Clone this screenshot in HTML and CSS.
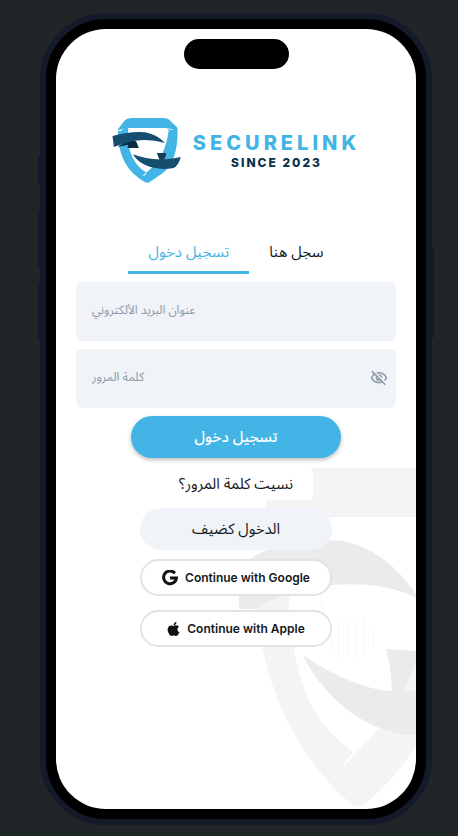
FILE: index.html
```html
<!DOCTYPE html>
<html lang="ar">
<head>
<meta charset="utf-8">
<meta name="viewport" content="width=device-width, initial-scale=1">
<title>SecureLink</title>
<link rel="stylesheet" href="styles.css">
</head>
<body>
<div class="phone">
  <span class="side side-mute"></span>
  <span class="side side-up"></span>
  <span class="side side-down"></span>
  <span class="side side-power"></span>
  <main class="screen">
    <svg class="watermark" viewBox="230 460 186 349" aria-hidden="true">
      <g fill="#f4f4f4">
        <path d="M266 503Q276 480 292 470Q300 468 312 468H416V517H262Z"/>
        <path d="M256 604Q266 599 289 590C289 650 302 692 320 720Q334 738 353 752L340 770L380 728L416 690V746C394 780 374 797 361 806Q356 808 350 803C300 759 264 694 256 604Z"/>
      </g>
      <g fill="#ebebeb">
        <path d="M238 574C245 553 285 540 330 540C365 541 393 561 416 594V598C385 581 340 582 304 589Q278 594 257 609H239Z"/>
        <path d="M303 655C330 674 365 690 392 691Q391 665 386 649L416 651V735C366 735 321 694 303 655Z"/>
      </g>
      <path fill="#f4f4f4" d="M416 662V691H404Z"/>
      <g fill="none" stroke="#f7f7f7">
        <path d="M338.500 618v40M347.500 622v34M356.500 620v40M364.500 617v40M373.500 627v20M331.500 630v20M320 598q5 14 6 30"/>
      </g>
    </svg>
    <div class="island"></div>
    <header class="brand">
      <svg class="brand-mark" viewBox="39 39 204 195" aria-hidden="true">
        <path fill="#43b4e6" d="M55 79Q55 72 60 67L76 46Q82 40 96 39H193Q207 40 213 48L232 66Q235 70 234 80C235 130 222 181 189 205L151 231Q143 236 134 230C88 202 57 163 55 79ZM86 69L85 110Q96 177 140 202L130 213L163 182Q199 145 208 75L202 69Z"/>
        <path fill="#fff" d="M54 78L73 70L63 79ZM204 69L222 75L212 75ZM129 213L141 201L137 211Z"/>
        <path fill="#092c3f" d="M54 126L88 106L110 109L118 129H84L86 119Z"/>
        <path fill="#1b3d55" d="M172 144H200Q201 154 195 164H180Z"/>
        <path fill="#43b4e6" d="M202 144H214L207 166H194Z"/>
        <path fill="#174e70" d="M39 93Q95 78 137 82Q171 88 197 114Q151 100 107 107Q75 112 43 126ZM100 148C139 163 188 169 244 156Q236 184 222 189C170 199 121 182 100 148Z"/>
      </svg>
      <div class="brand-text">
        <div class="brand-name">SECURELINK</div>
        <div class="brand-since">SINCE 2023</div>
      </div>
    </header>
    <nav class="tabs">
      <button class="tab tab-active" type="button">تسجيل دخول</button>
      <button class="tab" type="button">سجل هنا</button>
    </nav>
    <form class="form">
      <div class="field">
        <input class="field-input" id="email" type="email" placeholder=" ">
        <label class="field-label" for="email">عنوان البريد الألكتروني</label>
      </div>
      <div class="field">
        <input class="field-input" id="password" type="password" placeholder=" ">
        <label class="field-label" for="password">كلمة المرور</label>
        <button class="reveal" type="button" aria-label="إظهار كلمة المرور">
          <svg viewBox="0 0 24 24" aria-hidden="true"><path fill="#8b98a5" d="M12 6c3.790 0 7.170 2.130 8.820 5.500-.59 1.220-1.420 2.270-2.410 3.120l1.410 1.410c1.390-1.230 2.490-2.770 3.180-4.530C21.270 7.110 17 4 12 4c-1.270 0-2.490.2-3.640.57l1.650 1.650C10.660 6.090 11.320 6 12 6zm-1.070 1.140L13 9.210c.57.25 1.030.71 1.280 1.280l2.070 2.070c.08-.34.14-.7.14-1.070C16.500 9.010 14.480 7 12 7c-.37 0-.72.05-1.070.14zM2.010 3.870l2.680 2.680C3.060 7.830 1.770 9.530 1 11.500 2.730 15.890 7 19 12 19c1.520 0 2.980-.29 4.320-.82l3.420 3.420 1.410-1.410L3.420 2.450 2.010 3.870zm7.500 7.500 2.610 2.610c-.04.01-.08.02-.12.02-1.380 0-2.500-1.120-2.500-2.500 0-.05.01-.08.01-.13zm-3.400-3.400 1.750 1.750c-.23.55-.36 1.150-.36 1.780 0 2.480 2.020 4.500 4.500 4.500.63 0 1.230-.13 1.770-.36l.98.98c-.88.24-1.800.38-2.750.38-3.790 0-7.170-2.130-8.820-5.500.7-1.430 1.720-2.610 2.930-3.530z"/></svg>
        </button>
      </div>
      <button class="btn btn-primary" type="submit">تسجيل دخول</button>
      <button class="btn btn-text" type="button">نسيت كلمة المرور؟</button>
      <button class="btn btn-guest" type="button">الدخول كضيف</button>
      <button class="btn btn-social btn-google" type="button">
        <svg viewBox="0 0 16 16" aria-hidden="true"><path fill="none" stroke="#101213" stroke-width="3" d="M12.900 3.200A6.400 6.400 0 1 0 14.400 8.100H8"/></svg>
        <span>Continue with Google</span>
      </button>
      <button class="btn btn-social" type="button">
        <svg class="apple" viewBox="0 0 384 512" aria-hidden="true"><path fill="#101213" d="M318.700 268.700c-.2-36.700 16.400-64.400 50-84.800-18.800-26.900-47.200-41.700-84.700-44.600-35.500-2.800-74.300 20.700-88.500 20.700-15 0-49.400-19.700-76.400-19.700C63.300 141.200 4 184.800 4 273.500q0 39.300 14.400 81.200c12.800 36.700 59 126.700 107.200 125.200 25.200-.6 43-17.900 75.800-17.900 31.800 0 48.300 17.900 76.400 17.900 48.600-.7 90.400-82.500 102.600-119.300-65.200-30.700-61.700-90-61.700-91.900zm-56.600-164.200c27.300-32.400 24.800-61.900 24-72.500-24.100 1.400-52 16.400-67.900 34.900-17.500 19.800-27.800 44.300-25.600 71.900 26.100 2 49.900-11.400 69.500-34.300z"/></svg>
        <span>Continue with Apple</span>
      </button>
    </form>
  </main>
</div>
</body>
</html>
```
FILE: styles.css
```css
* { box-sizing: border-box; }

body {
  margin: 0;
  min-height: 100vh;
  display: flex;
  padding: 13px 26px 11px 40px;
  background: #202528;
  color: #14181b;
  font-family: "Open Sans", "Noto Sans Arabic", "DejaVu Sans", sans-serif;
}

button, input { font: inherit; color: inherit; border: 0; margin: 0; }
button { cursor: pointer; padding: 0; background: none; }

.phone {
  position: relative;
  flex: 1;
  display: flex;
  max-width: 440px;
  margin: 0 auto;
  padding: 10px;
  border: 6px solid #151a2a;
  border-radius: 66px;
  background: #000;
}

.side { position: absolute; width: 2px; background: #151a2a; }
.side-mute { left: -8px; top: 137px; height: 28px; }
.side-up { left: -8px; top: 191px; height: 57px; }
.side-down { left: -8px; top: 263px; height: 57px; }
.side-power { right: -8px; top: 229px; height: 90px; }

.screen {
  position: relative;
  flex: 1;
  min-width: 0;
  overflow: hidden;
  padding: 10px 20px;
  border-radius: 50px;
  background: #fff;
}

.watermark { position: absolute; right: 0; bottom: 0; width: 186px; height: 349px; }

.island { width: 105px; height: 30px; margin: 0 auto; border-radius: 15px; background: #000; }

.screen > :not(.watermark) { position: relative; }

.brand {
  display: flex;
  justify-content: center;
  gap: 12px;
  margin-top: 49px;
}
.brand-mark { width: 69px; height: 65px; }
.brand-text { padding-top: 13px; text-align: center; font-family: Inter, sans-serif; font-weight: 800; }
.brand-name { font-size: 20px; line-height: 24px; letter-spacing: 4px; color: #43b4e6; }
.brand-since { font-size: 12px; line-height: 16px; letter-spacing: 2px; color: #08324a; }

.tabs { display: flex; justify-content: center; margin-top: 49px; }
.tab {
  height: 42px;
  padding: 0 20px 2px;
  border-bottom: 3px solid transparent;
  font-size: 15px;
  line-height: 20px;
}
.tab-active { color: #43b4e6; border-color: #43b4e6; }

.form { display: flex; flex-direction: column; align-items: center; margin-top: 8px; }

.field { position: relative; display: flex; width: 100%; margin-bottom: 8px; }
.field-input {
  width: 100%;
  height: 59px;
  padding: 16px 40px 0 16px;
  border-radius: 6px;
  background: #f0f3f8;
  font-size: 14px;
}
.field-label {
  position: absolute;
  left: 16px;
  top: 18px;
  font-size: 12px;
  line-height: 20px;
  color: #8b98a5;
  pointer-events: none;
}
.field-input:focus + .field-label,
.field-input:not(:placeholder-shown) + .field-label { top: 4px; }
.reveal { position: absolute; right: 8px; top: 20px; width: 18px; height: 18px; }
.reveal svg { display: block; }

.btn {
  display: flex;
  align-items: center;
  justify-content: center;
  width: 192px;
  padding-bottom: 2px;
  font-size: 15px;
  line-height: 20px;
}
.btn-primary {
  width: 210px;
  height: 42px;
  border-radius: 21px;
  background: #43b4e6;
  color: #fff;
  font-weight: 500;
  box-shadow: 0 2px 4px rgba(0, 0, 0, 0.25);
}
.btn-text { width: 154px; height: 32px; margin-top: 10px; border-radius: 4px; background: #fff; }
.btn-guest { height: 42px; margin-top: 8px; border-radius: 21px; background: #f0f3f8; }
.btn-social {
  height: 37px;
  margin-top: 14px;
  padding: 0;
  gap: 7px;
  border: 2px solid #e0e3e7;
  border-radius: 19px;
  background: #fff;
  font-family: Inter, sans-serif;
  font-size: 12px;
  font-weight: 600;
}
.btn-google { margin-top: 9px; }
.btn-social svg { width: 16px; height: 16px; }
.btn-social .apple { width: 13px; }
```
